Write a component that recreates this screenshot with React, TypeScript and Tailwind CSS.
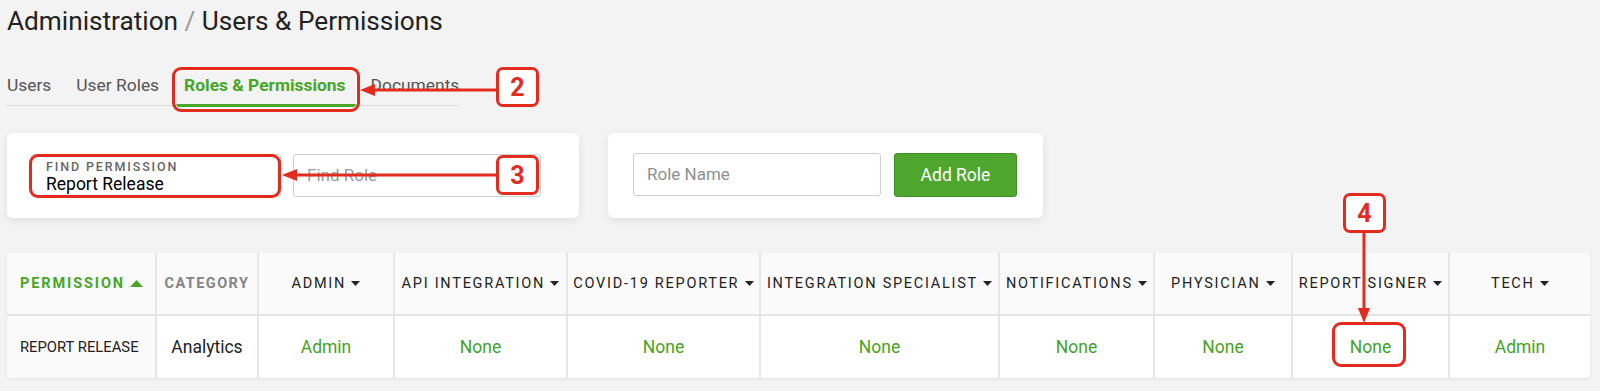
import React from "react";

const RED = "#e32b1e";

function Caret({ up = false, color = "#222", w = 8 }: { up?: boolean; color?: string; w?: number }) {
  const h = Math.round(w * 0.55);
  return (
    <svg width={w} height={h} viewBox={`0 0 ${w} ${h}`} className="inline-block align-middle">
      {up ? (
        <polygon points={`0,${h} ${w},${h} ${w / 2},0`} fill={color} />
      ) : (
        <polygon points={`0,0 ${w},0 ${w / 2},${h}`} fill={color} />
      )}
    </svg>
  );
}

const roles = [
  { name: "ADMIN", w: 136, v: "Admin" },
  { name: "API INTEGRATION", w: 173, v: "None" },
  { name: "COVID-19 REPORTER", w: 193, v: "None" },
  { name: "INTEGRATION SPECIALIST", w: 239, v: "None" },
  { name: "NOTIFICATIONS", w: 155, v: "None" },
  { name: "PHYSICIAN", w: 138, v: "None" },
  { name: "REPORT SIGNER", w: 157, v: "None" },
  { name: "TECH", w: 141, v: "Admin" },
];

function NumBox({ n, left, top }: { n: string; left: number; top: number }) {
  return (
    <div
      className="absolute w-[43px] h-[40px] bg-white border-[3px] border-[#e32b1e] rounded-[7px] flex items-center justify-center text-[#e32b1e] text-[25px] font-bold leading-none"
      style={{ left, top }}
    >
      {n}
    </div>
  );
}

function Ring({ left, top, w, h }: { left: number; top: number; w: number; h: number }) {
  return (
    <div
      className="absolute border-[3px] border-[#e32b1e] rounded-[9px] shadow-[inset_0_0_0_1px_rgba(255,255,255,0.9)]"
      style={{ left, top, width: w, height: h }}
    />
  );
}

export default function App() {
  return (
    <div className="relative w-[1600px] h-[391px] overflow-hidden bg-[#f3f3f3] font-['Roboto','Liberation_Sans',sans-serif] text-[#222]">
      <h1 className="pl-[7px] pt-[6px] text-[26.2px] leading-[30px] font-normal text-[#222] whitespace-nowrap">
        Administration <span className="text-[#999]">/</span> Users &amp; Permissions
      </h1>

      <div className="ml-[7px] mt-[37px] flex gap-[25px] w-fit whitespace-nowrap border-b border-[#dcdcdc] text-[17.4px] leading-[24px]">
        <div className="pb-[8px] text-[#555]">Users</div>
        <div className="pb-[8px] text-[#555]">User Roles</div>
        <div className="-mx-[11px] px-[11px] pb-[7px] border-b-[3px] border-[#4aa72a] text-[#47a626] font-bold -mb-[2px]">
          Roles &amp; Permissions
        </div>
        <div className="pb-[8px] text-[#555]">Documents</div>
      </div>

      <div className="ml-[7px] mt-[27px] flex gap-[29px]">
        <div className="w-[572px] h-[85px] bg-white rounded-[6px] shadow-[0_3px_10px_rgba(0,0,0,0.08)] pl-[24px] pt-[21px] flex gap-[12px]">
          <div className="w-[250px] h-[43px] border border-[#cfcfcf] rounded-[3px] px-[14px] pt-[4px] flex flex-col whitespace-nowrap">
            <span className="text-[12.5px] leading-[15px] tracking-[0.15em] font-medium text-[#666]">FIND PERMISSION</span>
            <span className="text-[17.5px] leading-[21px] text-black">Report Release</span>
          </div>
          <div className="w-[248px] h-[43px] border border-[#cfcfcf] rounded-[3px] px-[13px] flex items-center text-[17px] text-[#9a9a9a]">
            Find Role
          </div>
        </div>
        <div className="w-[435px] h-[85px] bg-white rounded-[6px] shadow-[0_3px_10px_rgba(0,0,0,0.08)] pl-[25px] pt-[20px] flex gap-[13px]">
          <div className="w-[248px] h-[43px] border border-[#cfcfcf] rounded-[3px] px-[13px] flex items-center text-[17px] text-[#8f8f8f]">
            Role Name
          </div>
          <button className="w-[123px] h-[44px] bg-[#4fa62f] border border-[#3f9024] rounded-[3px] text-white text-[17.5px] flex items-center justify-center">
            Add Role
          </button>
        </div>
      </div>

      <div className="ml-[7px] mt-[35px] w-[1583px] bg-white rounded-[4px] shadow-[0_1px_3px_rgba(0,0,0,0.08)] overflow-hidden">
        <table className="table-fixed border-collapse w-[1583px]">
          <colgroup>
            <col style={{ width: 149 }} />
            <col style={{ width: 102 }} />
            {roles.map((r) => (
              <col key={r.name} style={{ width: r.w }} />
            ))}
          </colgroup>
          <thead>
            <tr className="h-[62px] bg-[#fafafa] border-b-2 border-[#e4e4e4]">
              <th className="pl-[13px] text-left text-[14.5px] font-bold tracking-[0.13em] text-[#47a626] whitespace-nowrap">
                PERMISSION <Caret up color="#47a626" w={13} />
              </th>
              <th className="border-l-2 border-[#e6e6e6] text-center text-[14.5px] font-bold tracking-[0.1em] text-[#858585]">
                CATEGORY
              </th>
              {roles.map((r) => (
                <th
                  key={r.name}
                  className="border-l-2 border-[#e6e6e6] text-center text-[14.5px] font-normal tracking-[0.12em] text-[#222] whitespace-nowrap"
                >
                  {r.name} <Caret color="#222" w={9} />
                </th>
              ))}
            </tr>
          </thead>
          <tbody>
            <tr className="h-[63px]">
              <td className="pl-[13px] bg-[#fafafa] text-[14.8px] text-[#222] whitespace-nowrap">REPORT RELEASE</td>
              <td className="border-l-2 border-[#e6e6e6] text-center text-[17.5px] text-[#222]">Analytics</td>
              {roles.map((r) => (
                <td key={r.name} className="border-l-2 border-[#e6e6e6] text-center text-[17.5px] text-[#44a323]">
                  {r.v}
                </td>
              ))}
            </tr>
          </tbody>
        </table>
      </div>

      {/* Annotations */}
      <Ring left={172} top={67} w={188} h={45} />
      <Ring left={29} top={154} w={252} h={44} />
      <Ring left={1332} top={322} w={74} h={45} />
      <NumBox n="2" left={496} top={67} />
      <NumBox n="3" left={496} top={155} />
      <NumBox n="4" left={1343} top={193} />
      <svg className="absolute left-0 top-0 pointer-events-none" width={1600} height={391}>
        <line x1={372} y1={90} x2={497} y2={90} stroke={RED} strokeWidth={3} />
        <polygon points="360,90 375,84 375,96" fill={RED} />
        <line x1={294} y1={175} x2={497} y2={175} stroke={RED} strokeWidth={3} />
        <polygon points="282,175 297,169 297,181" fill={RED} />
        <line x1={1364} y1={232} x2={1364} y2={310} stroke={RED} strokeWidth={3} />
        <polygon points="1364,323 1358,308 1370,308" fill={RED} />
      </svg>
    </div>
  );
}
